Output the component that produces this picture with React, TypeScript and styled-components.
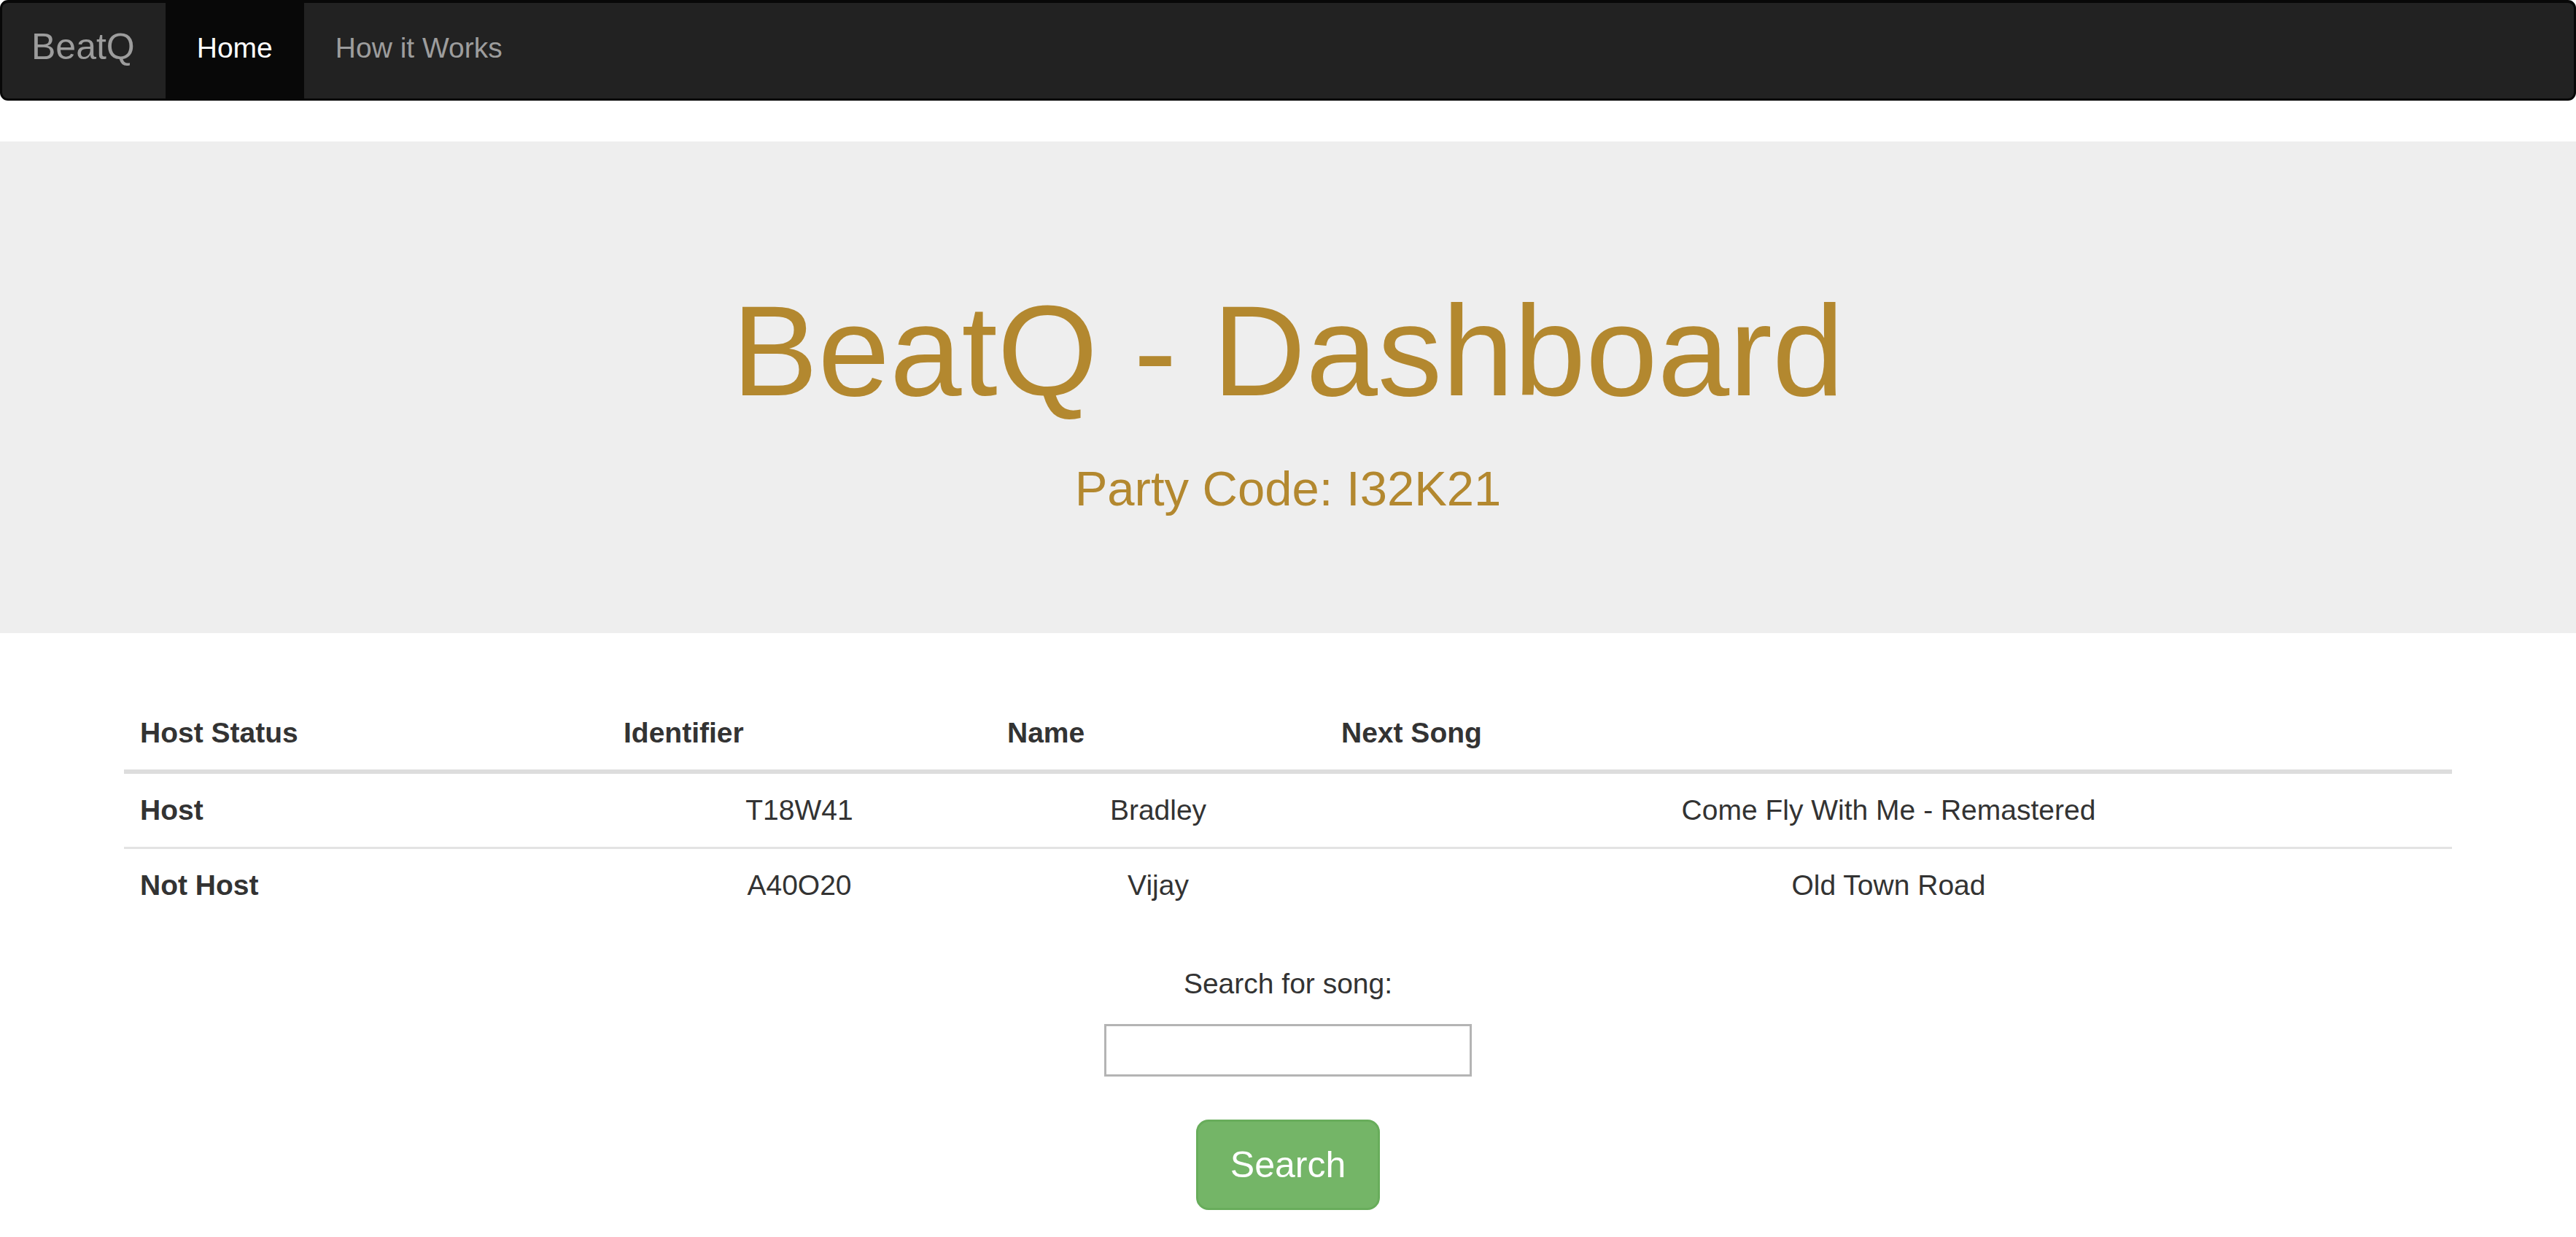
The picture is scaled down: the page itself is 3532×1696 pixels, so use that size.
import React from "react";
import styled, { createGlobalStyle } from "styled-components";

const GlobalStyle = createGlobalStyle`
  html, body {
    margin: 0;
    padding: 0;
    background: #ffffff;
  }
  body {
    font-family: "Liberation Sans", Arial, Helvetica, sans-serif;
    color: #333333;
  }
  * { box-sizing: border-box; }
`;

const Page = styled.div`
  width: 3532px;
  min-height: 1696px;
  background: #ffffff;
`;

const Navbar = styled.nav`
  display: flex;
  align-items: stretch;
  height: 138px;
  background: #222222;
  border-style: solid;
  border-color: #080808;
  border-width: 4px 3px 3px 3px;
  border-radius: 11px;
  margin-bottom: 56px;
`;

const Brand = styled.a`
  display: flex;
  align-items: center;
  padding: 0 42px 11px 40px;
  font-size: 50px;
  color: #9d9d9d;
  text-decoration: none;
  line-height: 1;
`;

const NavItem = styled.a<{ $active?: boolean }>`
  display: flex;
  align-items: center;
  padding: 0 43px 9px 43px;
  font-size: 39px;
  line-height: 1;
  text-decoration: none;
  color: ${(p) => (p.$active ? "#ffffff" : "#9d9d9d")};
  background: ${(p) => (p.$active ? "#080808" : "transparent")};
`;

const Jumbotron = styled.header`
  background: #eeeeee;
  text-align: center;
  padding: 191px 0 162px 0;
  margin-bottom: 87px;
`;

const Title = styled.h1`
  margin: 0;
  font-size: 177px;
  line-height: 192.5px;
  font-weight: 400;
  color: #b3882f;
`;

const Subtitle = styled.h3`
  margin: 55px 0 0 0;
  font-size: 67px;
  line-height: 73.7px;
  font-weight: 400;
  color: #b3882f;
`;

const Container = styled.main`
  width: 3192px;
  margin: 0 auto;
`;

const Table = styled.table`
  width: 100%;
  table-layout: fixed;
  border-collapse: collapse;
  border-spacing: 0;
  margin-bottom: 57px;
  font-size: 39px;
  line-height: 56px;
  color: #333333;
`;

const HeadCell = styled.th`
  text-align: left;
  font-weight: 700;
  padding: 22px;
  border-bottom: 6px solid #dddddd;
  vertical-align: bottom;
`;

const Row = styled.tr<{ $first?: boolean }>`
  border-top: ${(p) => (p.$first ? "0" : "3px solid #e3e3e3")};
`;

const RowHead = styled.th`
  text-align: left;
  font-weight: 700;
  padding: 22px;
`;

const Cell = styled.td`
  text-align: center;
  padding: 22px;
`;

const SearchArea = styled.section`
  display: flex;
  flex-direction: column;
  align-items: center;
`;

const Label = styled.label`
  display: block;
  font-size: 39px;
  line-height: 56px;
  color: #333333;
`;

const SearchInput = styled.input`
  margin-top: 27px;
  width: 504px;
  height: 72px;
  border: 3px solid #b4b4b4;
  background: #ffffff;
  font-size: 37px;
  padding: 0 8px;
  outline: none;
`;

const SearchButton = styled.button`
  margin-top: 59px;
  width: 252px;
  height: 124px;
  background: #74b567;
  border: 3px solid #68ad5b;
  border-radius: 17px;
  color: #ffffff;
  font-family: "Liberation Sans", Arial, Helvetica, sans-serif;
  font-size: 50px;
  line-height: 1;
  cursor: pointer;
  padding: 0;
`;

const rows = [
  { status: "Host", id: "T18W41", name: "Bradley", song: "Come Fly With Me - Remastered" },
  { status: "Not Host", id: "A40O20", name: "Vijay", song: "Old Town Road" },
];

export default function App() {
  return (
    <Page>
      <GlobalStyle />
      <Navbar>
        <Brand href="#">BeatQ</Brand>
        <NavItem href="#" $active>
          Home
        </NavItem>
        <NavItem href="#">How it Works</NavItem>
      </Navbar>
      <Jumbotron>
        <Title>BeatQ - Dashboard</Title>
        <Subtitle>Party Code: I32K21</Subtitle>
      </Jumbotron>
      <Container>
        <Table>
          <colgroup>
            <col style={{ width: "663px" }} />
            <col style={{ width: "526px" }} />
            <col style={{ width: "458px" }} />
            <col />
          </colgroup>
          <thead>
            <tr>
              <HeadCell>Host Status</HeadCell>
              <HeadCell>Identifier</HeadCell>
              <HeadCell>Name</HeadCell>
              <HeadCell>Next Song</HeadCell>
            </tr>
          </thead>
          <tbody>
            {rows.map((r, i) => (
              <Row key={r.id} $first={i === 0}>
                <RowHead scope="row">{r.status}</RowHead>
                <Cell>{r.id}</Cell>
                <Cell>{r.name}</Cell>
                <Cell>{r.song}</Cell>
              </Row>
            ))}
          </tbody>
        </Table>
        <SearchArea>
          <Label htmlFor="song">Search for song:</Label>
          <SearchInput id="song" type="text" />
          <SearchButton type="button">Search</SearchButton>
        </SearchArea>
      </Container>
    </Page>
  );
}
